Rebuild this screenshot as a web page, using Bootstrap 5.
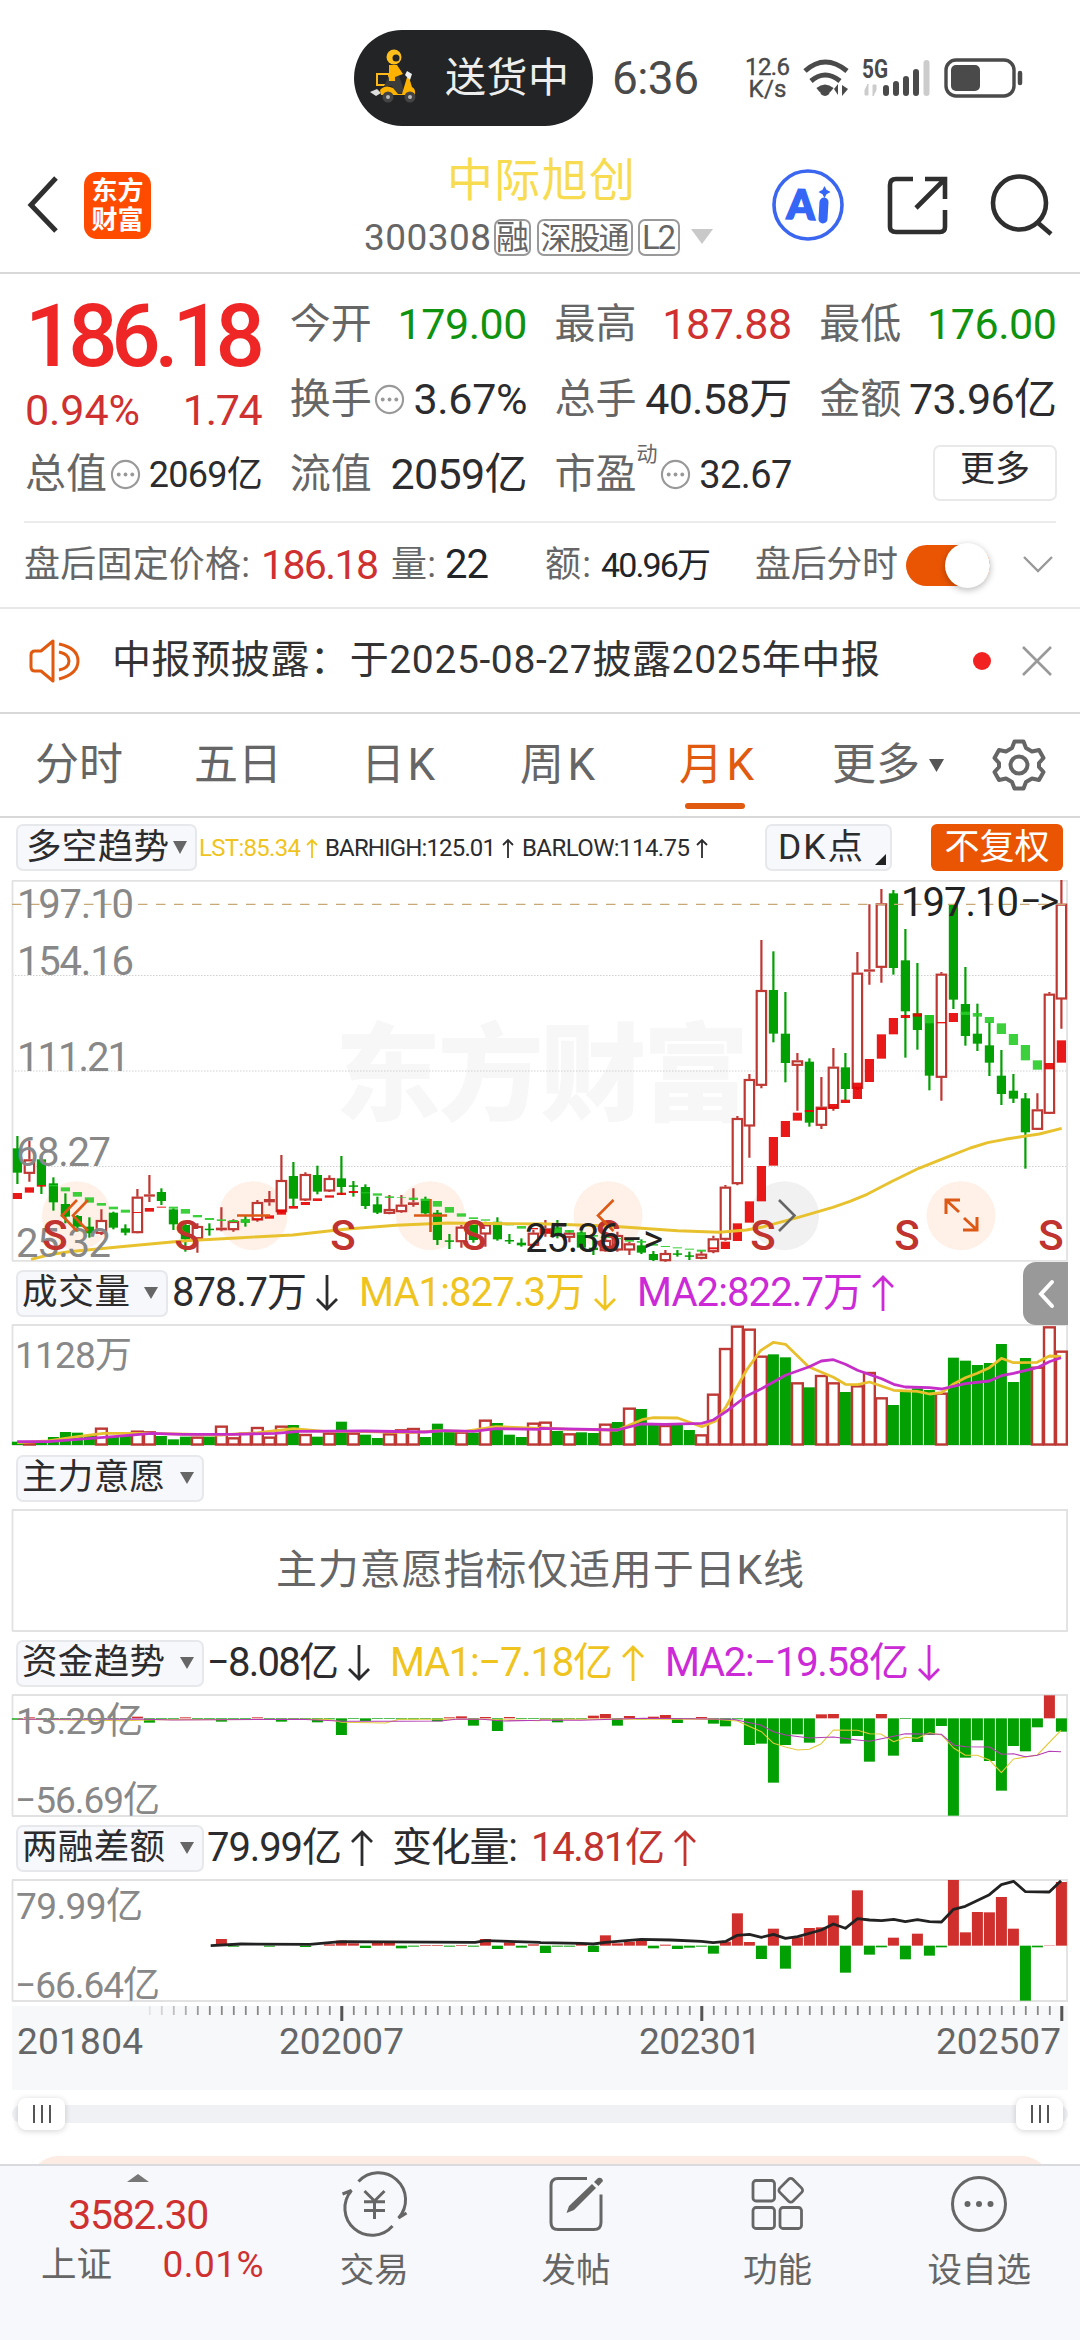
<!DOCTYPE html>
<html lang="zh-CN">
<head>
<meta charset="utf-8">
<meta name="viewport" content="width=1080">
<title>中际旭创 300308</title>
<link href="https://cdn.jsdelivr.net/npm/bootstrap@5.3.0/dist/css/bootstrap.min.css" rel="stylesheet">
<style>
:root{--up:#ee2626;--red:#cf3030;--green:#0f930f;--ink:#2c2c2e;--sub:#666;--brand:#ea5504;--ma1:#efc41f;--ma2:#cb2ad6;--rule:#d8d8d8}
body{width:1080px;height:2340px;overflow:hidden;background:#fff;color:var(--ink);font-family:Roboto,"Noto Sans CJK SC",sans-serif;line-height:1}
svg{display:block;flex:none}
span,button{white-space:nowrap;flex:none}
.screen{height:2340px}
.c-red{color:var(--red)}.c-green{color:var(--green)}.c-sub{color:var(--sub)}.c-brand{color:#e05a10}.c-ma1{color:var(--ma1)}.c-ma2{color:var(--ma2)}.c-dark{color:#c0332f}
.statusbar{height:138px;padding:18px 0 0 354px}
.pill{width:239px;height:96px;border-radius:48px;background:#222426;color:#eee;padding-left:15px;font-size:41px;margin-right:19px}
.clock{font-size:46px;color:#4a4a4a;width:133px}
.speed{font-size:24px;line-height:22px;width:45px;color:#4a4a4a;-webkit-text-stroke:.4px #4a4a4a}
.titlebar{height:136px;border-bottom:2px solid var(--rule);padding-left:24px;padding-right:26px}
.brandlogo{flex:none;width:67px;height:67px;border-radius:13px;background:#ff4b00;color:#fff;font-size:26px;font-weight:700;line-height:29px;margin-left:23px;padding-top:5px}
.stockhead{flex:none;margin-left:213px;width:350px;margin-right:52px;padding-top:6px}
.stockname{font-size:46px;line-height:58px;color:#f7dc52;margin-left:83px}
.stockcode{height:56px;color:var(--sub);font-size:37px}
.chip{border:2px solid #999;border-radius:7px;height:37px;line-height:33px;font-size:33px;color:var(--sub)}
.quote{padding:13px 23px 9px 25px;gap:27px}
.quote>div{width:237.75px}
.qrow{height:75px;font-size:41px}
.qval{font-size:43px}
.price{height:96px;font-size:87px;font-weight:500;color:var(--up);padding-top:2px}
.chg{height:54px;font-size:43px;color:var(--red)}
.morebtn{width:124px;height:56px;border:2px solid #e9e9e9;border-radius:7px;background:#fff;font-size:35px;line-height:46px;padding:0 0 6px;color:var(--ink);margin-top:-4px}
.afterhours{height:86px;margin:0 24px;border-top:2px solid #ececec;font-size:36px;color:var(--sub)}
.switch-on{width:84px;height:41px;border-radius:21px;background:var(--brand)}
.knob{width:45px;height:45px;border-radius:50%;background:#fff;box-shadow:0 2px 7px rgba(0,0,0,.28)}
.notice{height:107px;border-top:2px solid #e8e8e8;border-bottom:2px solid var(--rule);padding-left:29px;padding-right:28px;font-size:39px;color:#333}
.reddot{width:18px;height:18px;border-radius:50%;background:#f22222}
.periods{height:104px;border-bottom:2px solid var(--rule);font-size:44px;color:var(--sub);padding-left:35px}
.periods>span{height:102px;line-height:103px}
.period-on{position:relative;color:#e05a10}
.period-on i{position:absolute;left:6px;bottom:7px;width:60px;height:6px;border-radius:3px;background:#e05a10}
.legend{height:62px;padding-left:16px;font-size:40px}
.legend.first{padding-bottom:3px;font-size:24px}
.pick{height:47px;border:2px solid #e6e8ec;border-radius:7px;background:#f7f8fb;color:var(--ink);font-size:36px;padding:0 8px 0 4px}
.pick>span:first-child{font-size:35.5px}
.fq{width:132px;height:47px;border-radius:6px;background:var(--brand);color:#fff;font-size:35px}
.drawer{position:absolute;right:12px;top:0;width:45px;height:63px;border-radius:13px 0 0 13px;background:#999}
.slider{height:44px;padding:0 12px;position:relative}
.track{height:18px;border-radius:9px;background:#f0f1f4}
.grip{position:absolute;top:6px;width:47px;height:32px;border-radius:8px;background:#fff;box-shadow:0 1px 6px rgba(0,0,0,.18)}
.grip i{width:2px;height:18px;background:#555}
.peekwrap{height:28px;padding:20px 30px 0;overflow:hidden}
.peek{height:60px;border-radius:28px;background:#fdece3}
.tabbar{height:176px;background:#f7f8fb;border-top:2px solid #d9dade;color:var(--sub);font-size:34.5px}
.tabbar .item{width:202px}
.tabbar .item span{line-height:56px}
</style>
</head>
<body>
<main class="screen d-flex flex-column">

<header class="statusbar d-flex align-items-center">
  <div class="pill d-flex align-items-center">
    <svg width="48" height="60" viewBox="0 0 48 60">
      <path d="M1 44l7-3 4 4-5 3z" fill="#ddd"/><path d="M8 26h12v11H8z" fill="none" stroke="#ffb81c" stroke-width="2"/><path d="M20 28h10l3 8 2 9-8 1-4-8h-8z" fill="#3c3c3a"/>
      <circle cx="25" cy="9" r="7.500" fill="#ffc01e"/><circle cx="27" cy="10" r="3.500" fill="#222426"/><path d="M20 17h8l6 9-8 3v4h-6z" fill="#ffb300"/>
      <path d="M11 42q5-6 13-2l5 6h4l6-20 4 13q4 2 3 8H12z" fill="#ffb300"/><circle cx="19" cy="49" r="5.500" fill="#444"/><circle cx="19" cy="49" r="2" fill="#bbb"/><circle cx="41" cy="49" r="5.500" fill="#444"/><circle cx="41" cy="49" r="2" fill="#bbb"/><path d="M38 23l5 3-2 6-5-5z" fill="#eee"/>
    </svg>
    <span data-w="124" style="margin-left:28px">送货中</span>
  </div>
  <span class="clock"><span data-w="87">6:36</span></span>
  <div class="speed d-flex flex-column align-items-center"><span data-w="45">12.6</span><span data-w="38">K/s</span></div>
  <svg style="margin-left:9px" width="280" height="60" viewBox="800 48 280 60">
    <g fill="none" stroke="#4a4a4a" stroke-width="5"><path d="M806 71q20-18 42 0M812 81q14-12 29 0M819 90q7-6 14 0"/></g><circle cx="826" cy="91" r="5" fill="#4a4a4a"/>
    <path d="M839 84v11l-4-6zM843 85v11l6-7z" fill="#4a4a4a"/>
    <text x="863" y="78" font-size="25" font-weight="700" fill="#4a4a4a" textLength="26" lengthAdjust="spacingAndGlyphs">5G</text>
    <path d="M869 84v11h-3v-5zM874 96v-11h3v5z" fill="#ccc" stroke="#ccc" stroke-width="1"/>
    <g stroke-width="6" stroke-linecap="round" stroke="#4a4a4a"><path d="M887 93v-5M897 93v-9M907 93v-14M917 93v-21"/><path d="M927.500 93v-30" stroke="#ccc"/></g>
    <rect x="947" y="60" width="68" height="36" rx="10" fill="none" stroke="#4a4a4a" stroke-width="3.400"/><rect x="952" y="65" width="29" height="26" rx="5" fill="#4a4a4a"/><path d="M1021 73v10" stroke="#4a4a4a" stroke-width="4.500" stroke-linecap="round"/>
  </svg>
</header>

<section class="titlebar d-flex align-items-center">
  <svg width="37" height="60" viewBox="0 0 37 60"><path d="M32 5L7 32l25 26" transform="translate(0 -2)" fill="none" stroke="#2f2f2f" stroke-width="5"/></svg>
  <div class="brandlogo text-center"><div>东方</div><div>财富</div></div>
  <div class="stockhead">
    <div class="stockname"><span data-w="188">中际旭创</span></div>
    <div class="stockcode d-flex align-items-center"><span data-w="127">300308</span>
      <span class="chip px-0 text-center" style="width:37px;margin-left:3px">融</span><span class="chip text-center" style="width:96px;margin-left:6px"><span data-w="89" style="font-size:31px">深股通</span></span><span class="chip text-center" style="width:42px;margin-left:5px"><span data-w="34">L2</span></span>
      <svg style="margin-left:11px" width="22" height="16"><path d="M0 0h22L11 15z" fill="#c9c9c9"/></svg>
    </div>
  </div>
  <svg width="288" height="80" viewBox="766 165 288 80">
    <circle cx="808" cy="205" r="34" fill="#fff" stroke="#3b66f0" stroke-width="3.600"/>
    <text x="787" y="219.500" font-family="Lato" font-weight="900" font-size="41" fill="#3566f5" stroke="#3566f5" stroke-width="1.800" textLength="28" lengthAdjust="spacingAndGlyphs" transform="rotate(2 808 205)">A</text>
    <path d="M824 202l-1 17" stroke="#3566f5" stroke-width="9" stroke-linecap="round"/><path d="M824.500 186l2 3.800 4 2.200-4 2.200-2 3.800-2-3.800-4-2.200 4-2.200z" fill="#3566f5"/>
    <g fill="none" stroke="#2f2f2f" stroke-width="4.600"><path d="M913 179h-17q-6 0-6 6v42q0 5 6 5h44q5 0 5-5v-17M925 179h20v20M945 179l-29 29"/><circle cx="1019.500" cy="203" r="26.500"/><path d="M1037 222l14 12"/></g>
  </svg>
</section>

<section class="quote d-flex">
  <div>
    <div class="price d-flex align-items-center"><span data-w="240">186.18</span></div>
    <div class="chg d-flex align-items-center justify-content-between"><span data-w="115">0.94%</span><span data-w="80">1.74</span></div>
    <div class="qrow d-flex align-items-center"><span class="c-sub" data-w="82">总值</span><svg style="margin-left:3px" width="31" height="31" viewBox="0 0 32 32"><circle cx="16" cy="16" r="14" fill="none" stroke="#999" stroke-width="2.200"/><g fill="#999"><circle cx="9" cy="16" r="2"/><circle cx="16" cy="16" r="2"/><circle cx="23" cy="16" r="2"/></g></svg><span class="ms-auto" data-w="114" style="font-size:36px">2069亿</span></div>
  </div>
  <div>
    <div class="qrow d-flex align-items-center justify-content-between"><span class="c-sub">今开</span><span class="qval c-green" data-w="130">179.00</span></div>
    <div class="qrow d-flex align-items-center"><span class="c-sub">换手</span><svg style="margin-left:2px" width="31" height="31" viewBox="0 0 32 32"><circle cx="16" cy="16" r="14" fill="none" stroke="#999" stroke-width="2.200"/><g fill="#999"><circle cx="9" cy="16" r="2"/><circle cx="16" cy="16" r="2"/><circle cx="23" cy="16" r="2"/></g></svg><span class="qval ms-auto" data-w="114">3.67%</span></div>
    <div class="qrow d-flex align-items-center justify-content-between"><span class="c-sub">流值</span><span class="qval" data-w="137">2059亿</span></div>
  </div>
  <div>
    <div class="qrow d-flex align-items-center justify-content-between"><span class="c-sub">最高</span><span class="qval c-red" data-w="130">187.88</span></div>
    <div class="qrow d-flex align-items-center justify-content-between"><span class="c-sub">总手</span><span class="qval" data-w="147">40.58万</span></div>
    <div class="qrow d-flex align-items-center"><span class="c-sub">市盈</span><span class="c-sub align-self-start" style="font-size:21px;padding-top:7px">动</span><svg style="margin-left:2px" width="31" height="31" viewBox="0 0 32 32"><circle cx="16" cy="16" r="14" fill="none" stroke="#999" stroke-width="2.200"/><g fill="#999"><circle cx="9" cy="16" r="2"/><circle cx="16" cy="16" r="2"/><circle cx="23" cy="16" r="2"/></g></svg><span class="ms-auto" data-w="93" style="font-size:38px">32.67</span></div>
  </div>
  <div>
    <div class="qrow d-flex align-items-center justify-content-between"><span class="c-sub">最低</span><span class="qval c-green" data-w="130">176.00</span></div>
    <div class="qrow d-flex align-items-center justify-content-between"><span class="c-sub">金额</span><span class="qval" data-w="148">73.96亿</span></div>
    <div class="qrow d-flex align-items-center justify-content-end"><button class="morebtn">更多</button></div>
  </div>
</section>

<section class="afterhours d-flex align-items-center">
  <span data-w="226">盘后固定价格:</span><span class="c-red" data-w="118" style="font-size:41px;margin-left:11px">186.18</span><span style="margin-left:12px" data-w="45">量:</span><span class="text-dark" data-w="44" style="font-size:40px;margin-left:9px">22</span><span style="margin-left:56px" data-w="46">额:</span><span data-w="110" class="text-dark" style="font-size:34px;margin-left:10px">40.96万</span><span style="margin-left:44px" data-w="143">盘后分时</span>
  <div class="switch-on d-flex align-items-center justify-content-end" style="margin-left:8px"><div class="knob"></div></div>
  <svg style="margin-left:33px" width="30" height="20"><path d="M1 2l14 14L29 2" fill="none" stroke="#999" stroke-width="2.400"/></svg>
</section>

<section class="notice d-flex align-items-center">
  <svg width="53" height="46" viewBox="29 636 53 46"><g fill="none" stroke="#e05a10" stroke-width="3"><path d="M53 639v40l-12-10h-6q-4 0-4-4v-12q0-4 4-4h6z" stroke-linejoin="round"/><path d="M59 642q19 4 19 17t-19 18M59 650q10 2 10 9t-10 9"/></g></svg>
  <span data-w="768" style="margin-left:30px">中报预披露：于2025-08-27披露2025年中报</span>
  <span class="reddot ms-auto"></span>
  <svg style="margin-left:31px" width="30" height="30"><path d="M1 1l28 28M29 1L1 29" stroke="#999" stroke-width="2.600"/></svg>
</section>

<nav class="periods d-flex align-items-center">
  <span data-w="88">分时</span><span data-w="88" style="margin-left:71px">五日</span><span data-w="74" style="margin-left:79px">日K</span><span data-w="75" style="margin-left:85px">周K</span><span class="period-on" style="margin-left:84px;width:76px"><span data-w="75">月K</span><i></i></span><span data-w="88" style="margin-left:77px">更多</span>
  <svg style="margin-left:9px" width="16" height="13"><path d="M0 0h15L7.500 13z" fill="#555"/></svg>
  <svg style="margin-left:46px" width="56" height="56" viewBox="-28 -28 56 56"><g fill="none" stroke="#666" stroke-width="4"><path d="M-4.500-23.500h9l2.500 6.500 6 3.500 7-1.500 4.500 8-4.500 5v4l4.500 5-4.500 8-7-1.500-6 3.500-2.500 6.500h-9l-2.500-6.500-6-3.500-7 1.500-4.500-8 4.500-5v-4l-4.500-5 4.500-8 7 1.500 6-3.500z" stroke-linejoin="round"/><circle r="8.500"/></g></svg>
</nav>

<div class="legend first d-flex align-items-center">
  <div class="pick d-flex align-items-center" style="width:181px;padding:0 0 0 8px"><span data-w="143">多空趋势</span><svg class="ms-1" width="14" height="13"><path d="M0 0h14L7 13z" fill="#666"/></svg></div>
  <span class="c-ma1" data-w="102" style="margin-left:2px">LST:85.34</span><svg style="margin-left:5px" width="12" height="20"><path d="M6 20V2M1 7l5-5 5 5" fill="none" stroke="#efc41f" stroke-width="1.800"/></svg>
  <span style="margin-left:7px" data-w="171">BARHIGH:125.01</span><svg style="margin-left:6px" width="12" height="20"><path d="M6 20V2M1 7l5-5 5 5" fill="none" stroke="#2c2c2e" stroke-width="1.800"/></svg>
  <span style="margin-left:8px" data-w="168">BARLOW:114.75</span><svg style="margin-left:6px" width="12" height="20"><path d="M6 20V2M1 7l5-5 5 5" fill="none" stroke="#2c2c2e" stroke-width="1.800"/></svg>
  <div class="pick d-flex align-items-center" style="width:127px;margin-left:57px;padding:0 4px 0 11px"><span data-w="85">DK点</span><svg class="ms-auto align-self-end mb-1" width="11" height="11"><path d="M11 0v11H0z" fill="#222"/></svg></div>
  <div class="fq d-flex align-items-center justify-content-center" style="margin-left:39px">不复权</div>
</div>

<svg id="kline" width="1080" height="382" viewBox="0 880 1080 382"></svg>

<div class="legend d-flex align-items-center position-relative">
  <div class="pick d-flex align-items-center justify-content-between" style="width:152px"><span data-w="108">成交量</span><svg width="14" height="12"><path d="M0 0h14L7 12z" fill="#666"/></svg></div>
  <span data-w="135" style="margin-left:4px">878.7万</span><i data-arrow="down" data-c="#2c2c2e"></i>
  <span class="c-ma1" data-w="226" style="margin-left:21px">MA1:827.3万</span><i data-arrow="down" data-c="#efc41f"></i>
  <span class="c-ma2" data-w="226" style="margin-left:21px">MA2:822.7万</span><i data-arrow="up" data-c="#cb2ad6"></i>
  <div class="drawer d-flex align-items-center justify-content-center"><svg width="18" height="30"><path d="M15 3L4 15l11 12" fill="none" stroke="#fff" stroke-width="4" stroke-linecap="round"/></svg></div>
</div>
<svg id="volume" width="1080" height="123" viewBox="0 1324 1080 123"></svg>

<div class="legend d-flex align-items-center">
  <div class="pick d-flex align-items-center justify-content-between" style="width:188px"><span data-w="143">主力意愿</span><svg width="14" height="12"><path d="M0 0h14L7 12z" fill="#666"/></svg></div>
</div>
<svg id="intent" width="1080" height="123" viewBox="0 1509 1080 123"></svg>

<div class="legend d-flex align-items-center">
  <div class="pick d-flex align-items-center justify-content-between" style="width:188px"><span data-w="143">资金趋势</span><svg width="14" height="12"><path d="M0 0h14L7 12z" fill="#666"/></svg></div>
  <span data-w="132" style="margin-left:3px">−8.08亿</span><i data-arrow="down" data-c="#2c2c2e"></i>
  <span class="c-ma1" data-w="223" style="margin-left:20px">MA1:−7.18亿</span><i data-arrow="up" data-c="#efc41f"></i>
  <span class="c-ma2" data-w="244" style="margin-left:21px">MA2:−19.58亿</span><i data-arrow="down" data-c="#cb2ad6"></i>
</div>
<svg id="fund" width="1080" height="123" viewBox="0 1694 1080 123"></svg>

<div class="legend d-flex align-items-center">
  <div class="pick d-flex align-items-center justify-content-between" style="width:188px"><span data-w="143">两融差额</span><svg width="14" height="12"><path d="M0 0h14L7 12z" fill="#666"/></svg></div>
  <span data-w="135" style="margin-left:3px">79.99亿</span><i data-arrow="up" data-c="#2c2c2e"></i>
  <span data-w="126" style="margin-left:19px">变化量:</span><span class="c-dark" data-w="134" style="margin-left:13px">14.81亿</span><i data-arrow="up" data-c="#c0332f"></i>
</div>
<svg id="margin" width="1080" height="123" viewBox="0 1879 1080 123"></svg>
<svg id="axis" width="1080" height="90" viewBox="0 2002 1080 90"></svg>

<div class="slider d-flex flex-column justify-content-center">
  <div class="track"></div>
  <div class="grip d-flex align-items-center justify-content-center" style="left:18px;gap:6px"><i></i><i></i><i></i></div>
  <div class="grip d-flex align-items-center justify-content-center" style="right:17px;gap:6px"><i></i><i></i><i></i></div>
</div>
<div class="peekwrap"><div class="peek"></div></div>

<footer class="tabbar d-flex">
  <div style="width:274px">
    <svg style="margin:8px 0 0 127px" width="22" height="8"><path d="M11 0l11 8H0z" fill="#777"/></svg>
    <div class="text-center c-red" style="font-size:41px;line-height:66px;height:62px"><span data-w="141" class="ms-1">3582.30</span></div>
    <div class="d-flex align-items-center justify-content-between" style="padding:0 10px 0 41px;line-height:40px;margin-top:1px"><span data-w="71" style="font-size:35.500px">上证</span><span class="c-red" data-w="101" style="font-size:37px">0.01%</span></div>
  </div>
  <div class="item d-flex flex-column align-items-center">
    <svg width="68" height="76" viewBox="341 2166 68 76"><g fill="none" stroke="#666" stroke-width="3"><path d="M359.500 2181.500A27 27 0 0 1 399.500 2218l8-5M393.500 2226A27 27 0 0 1 352.500 2190.500l-9 3.500"/><path d="M365.500 2191l10 10 10-10M375.500 2201v18M365 2201.800h21M365 2210.500h21"/></g></svg><span>交易</span></div>
  <div class="item d-flex flex-column align-items-center">
    <svg width="58" height="76" viewBox="548 2166 58 76"><path d="M588 2178.500h-29q-7 0-7 7v37q0 7 7 7h36q7 0 7-7v-28" fill="none" stroke="#666" stroke-width="3"/><path d="M567.500 2213l2.500-7 23-22 4 4-22 22z M595 2182l4-4q4-1 5 3l-4.500 5z" fill="#666"/></svg><span>发帖</span></div>
  <div class="item d-flex flex-column align-items-center">
    <svg width="56" height="76" viewBox="751 2166 56 76"><g fill="none" stroke="#666" stroke-width="2.800"><rect x="754" y="2180.500" width="21.500" height="20.500" rx="3"/><rect x="754" y="2207.500" width="21.500" height="21" rx="3"/><rect x="781" y="2207.500" width="21.500" height="21" rx="3"/><rect x="782.500" y="2181" width="18.500" height="18.500" rx="3" transform="rotate(45 791.750 2190.250)"/></g></svg><span>功能</span></div>
  <div class="item d-flex flex-column align-items-center">
    <svg width="60" height="76" viewBox="949 2166 60 76"><circle cx="979" cy="2204" r="26.500" fill="none" stroke="#666" stroke-width="3"/><g fill="#666"><circle cx="967.500" cy="2204" r="3"/><circle cx="979" cy="2204" r="3"/><circle cx="990.500" cy="2204" r="3"/></g></svg><span>设自选</span></div>
</footer>
</main>

<script src="https://cdn.jsdelivr.net/npm/bootstrap@5.3.0/dist/js/bootstrap.bundle.min.js"></script>
<script>
// Spread each figure over its column width
document.querySelectorAll('[data-w]').forEach(e=>{
  e.style.display='inline-block';
  const n=[...e.textContent].length, ls=(e.dataset.w-e.getBoundingClientRect().width)/Math.max(1,n-1);
  e.style.letterSpacing=ls+'px'; e.style.marginRight=-ls+'px';
});
document.querySelectorAll('[data-arrow]').forEach(e=>{
  const d=e.dataset.arrow=='up'?'M11 36V2M1 12L11 2l10 10':'M11 0v34M1 24l10 10 10-10';
  e.outerHTML=`<svg style="margin-left:9px" width="22" height="36"><path d="${d}" fill="none" stroke="${e.dataset.c}" stroke-width="2.800"/></svg>`;
});
const RED='#be3834',GRN='#03a003',X0=17.4,STEP=12;
const cx=i=>X0+i*STEP;
// Curve points: a = left half, b = right half, three y units per pixel
const line=(a,b,oy,c,w)=>{
  const p=a.map(([x,y])=>[x/2.904,oy+y/3]).concat(b.map(([x,y])=>[540+x/2.904,oy+y/3]));
  return `<polyline points="${p.map(q=>q.map(v=>v.toFixed(1)).join()).join(' ')}" fill="none" stroke="${c}" stroke-width="${w}" stroke-linejoin="round"/>`;
};
const frame=(t,b)=>`<path d="M12.500 ${t}V${b}M1067 ${t}V${b}M12 ${t}H1068M12 ${b}H1068" stroke="#e2e2e2" stroke-width="1.800" fill="none"/>`;
const txt=(x,y,s,w,fs=40,c='#888',ex='')=>`<text x="${x}" y="${y}" font-size="${fs}" fill="${c}" textLength="${w}" ${ex}>${s}</text>`;
const put=(id,s)=>document.getElementById(id).innerHTML=s;

// high, body top, body bottom, low
const K=`g798,835,908,942 r812,868,910,935 g865,868,945,972 g922,940,997,1022 g970,1002,1040,1060 g1035,1038,1070,1085 g1042,1070,1090,1103 r1018,1050,1090,1095 g1025,1028,1073,1078 g1063,1075,1088,1096 r957,980,1088,1090 r915,973,980,996 g955,966,993,1005 g1015,1018,1063,1080 g1055,1065,1108,1145 r1060,1068,1106,1148 g1060,1076,1080,1097 r1012,1073,1081,1084 r1048,1053,1079,1085 g1038,1048,1058,1070 r990,996,1050,1055 r963,987,997,1007 r855,930,1025,1030 g876,918,986,1008 r907,912,990,993 g887,915,965,973 r916,924,963,966 g858,925,951,975 g933,946,949,980 g943,951,1008,1017 g980,1003,1028,1032 r975,1017,1030,1033 r975,1004,1025,1028 r955,997,1005,1010 g980,987,1030,1033 g1020,1028,1110,1125 g1092,1111,1115,1137 r1065,1070,1115,1133 g1050,1060,1110,1118 r1055,1063,1092,1130 g1042,1060,1108,1112 g1092,1110,1114,1122 g1105,1118,1126,1130 r1080,1088,1126,1132 r1050,1075,1090,1100 g1050,1072,1095,1105 r1080,1088,1102,1117 g1080,1087,1133,1138 g1100,1133,1140,1155 r1105,1110,1142,1145 r1085,1095,1140,1145 r1115,1120,1140,1155 g1108,1126,1148,1152 g1143,1152,1170,1173 r1140,1149,1172,1175 g1140,1150,1154,1160 g1145,1156,1160,1170 r1142,1151,1165,1168 r1097,1105,1145,1150 r945,950,1108,1112 r738,744,941,946 r612,627,768,863 r210,360,646,655 g244,360,491,517 g366,491,579,637 r549,571,586,722 g565,575,758,770 r621,710,766,777 r534,590,715,722 g549,592,657,690 r246,308,655,660 r103,298,305,344 r57,100,292,338 g60,70,294,314 g177,271,424,563 g279,430,480,539 g435,435,617,661 r306,311,622,692 g103,103,389,417 g291,402,498,527 g401,491,521,543 g455,526,578,618 g540,617,672,705 g612,662,686,699 g669,685,787,896 r670,718,778,780 r366,371,730,732 r30,101,387,476`.split(' ');
const T=`r969,987 r952,968 r945,950 g945,949 g952,964 g966,980 g982,998 g999,1007 g1010,1018 g1019,1028 r1026,1029 r1014,1025 r1010,1013 g1010,1016 g1017,1031 g1035,1042 g1044,1050 g1048,1053 g1050,1056 g1048,1058 r1045,1050 r1036,1046 r1018,1034 r1008,1016 r996,1005 r985,993 r976,983 r968,975 r963,969 g967,970 g970,977 g979,984 g982,984 g983,990 g986,993 g993,1010 g1011,1028 g1030,1040 g1042,1047 g1048,1052 g1055,1059 g1061,1066 g1068,1076 r1074,1078 r1078,1088 g1075,1090 g1080,1088 g1090,1095 g1095,1100 g1100,1104 g1104,1108 g1110,1115 g1113,1118 g1122,1127 g1128,1131 g1132,1135 g1136,1139 g1139,1145 r1132,1138 r1115,1137 r1060,1113 r994,1058 r888,994 r801,887 r753,801 r728,752 r720,726 r714,720 r702,716 r689,699 r638,687 r567,636 r493,566 r444,493 r435,444 r430,440 g435,460 r456,460 r429,456 g425,435 g429,440 g441,459 g460,492 g492,525 g525,571 g571,599 r579,598 r511,578`.split(' ');
let s='';
// Translucent control discs
[76.5,253,430.5,608,784.5,961].forEach((x,i)=>s+=`<circle cx="${x}" cy="1215.700" r="34.500" fill="${i==4?'#f1f1f1':'#fff0e8'}"/>`);
s+=`<text x="335" y="1112" font-size="106" font-weight="900" fill="#f7f7f7" textLength="414">东方财富</text>`;
[975.5,1071,1166.5].forEach(y=>s+=`<path d="M12 ${y}H1067" stroke="#d0d0d0" stroke-width="1" stroke-dasharray="1.500 1.500"/>`);
s+=frame(880.8,1260.8);
K.forEach((k,i)=>{
  const [h,t,b,l]=k.slice(1).split(',').map(v=>870+v/3), x=cx(i), r=k[0]=='r', c=r?RED:GRN;
  if(r){
    s+=`<path d="M${x} ${h}V${t}M${x} ${b}V${l}" stroke="${c}" stroke-width="2.200"/>`;
    s+= b-t<3.5?`<rect x="${x-5.500}" y="${t}" width="11" height="${b-t}" fill="${c}"/>`:`<rect x="${x-4.700}" y="${t+1}" width="9.400" height="${b-t-1.500}" fill="#fff" stroke="${c}" stroke-width="2.200"/>`;
  } else s+=`<path d="M${x} ${h}V${l}" stroke="${c}" stroke-width="2.200"/><rect x="${x-4.600}" y="${t}" width="9.200" height="${Math.max(1.500,b-t)}" fill="${c}"/>`;
});
T.forEach((k,i)=>{
  const [t,b]=k.slice(1).split(',').map(v=>870+v/3);
  s+=`<rect x="${cx(i)-4.600}" y="${t}" width="9.200" height="${b-t}" fill="${k[0]=='r'?'#e80000':'#27cb27'}" opacity=".9"/>`;
});
s+=`<path d="M12 904.300H1067" stroke="#c9a878" stroke-width="1.200" stroke-dasharray="9.500 8.500"/>`;
s+=line([[90,1168],[140,1155],[200,1145],[350,1130],[538,1112],[700,1103],[850,1095],[1000,1078],[1150,1066],[1300,1059],[1568,1062]],[[0,1061],[200,1068],[400,1082],[520,1087],[600,1080],[650,1070],[750,1042],[850,1012],[900,994],[950,973],[1020,935],[1100,895],[1180,862],[1250,834],[1300,818],[1350,808],[1450,792],[1515,775]],870,'#e8c22e',2.900);
s+=txt(17,918,'197.10',117)+txt(17,975,'154.16',117)+txt(17,1070.500,'111.21',113)+txt(16,1165.500,'68.27',95)+txt(16,1257,'25.32',95);
[55,187,343,474,608,763,907,1051].forEach(x=>s+=`<text x="${x}" y="1249.500" font-size="42" font-weight="500" text-anchor="middle" fill="#c0332f">S</text>`);
s+=`<g fill="none" stroke="#dd5a16" stroke-width="2.600"><path d="M77 1200l-15 15.500 15 15.500M88 1200l-15 15.500 15 15.500M237 1215.500h33M414 1215.500h33M430.500 1199v33M613.500 1200l-15.500 15.500 15.500 15.500"/><path stroke="#666" d="M779 1200l15.500 15.500L779 1231"/><path stroke-width="3" d="M946 1214v-14h14M946 1200l13 12M977 1217v13h-14M977 1230l-13-12"/></g>`;
s+=txt(525,1252,'25.36',96,40,'#222')+txt(621,1252,'−&gt;',42,38,'#222')+txt(901,916,'197.10',118,40,'#222')+txt(1020,914,'−&gt;',39,38,'#222');
put('kline',s);

const V='g545 r548 g543 g531 g516 g518 g527 r503 g530 g527 r512 r514 g528 g538 g530 r530 g530 r497 r532 r518 r501 r530 r497 g495 r522 g530 r518 g485 r518 g524 g534 r520 r508 r504 g531 g491 g515 r515 g518 r479 g489 g524 g531 r488 r485 g513 r520 g517 g519 r491 g486 r443 g447 g495 r495 g495 g510 r523 r401 r264 r197 r206 r287 g283 g292 r367 g382 r345 r367 g396 r376 r336 r412 g435 g395 g385 g390 r398 g293 g302 g315 g309 g252 g366 g294 r320 r199 r272'.split(' ');
s=frame(1325,1445);
V.forEach((v,i)=>{
  const t=1260+v.slice(1)/3,h=1445-t,x=cx(i);
  s+=v[0]=='r'?`<rect x="${x-5.400}" y="${t+1}" width="10.800" height="${Math.max(.5,h-1.500)}" fill="#fff" stroke="${RED}" stroke-width="2.400"/>`:`<rect x="${x-5.500}" y="${t}" width="11" height="${h}" fill="${GRN}"/>`;
});
s+=line([[50,548],[140,543],[225,530],[300,520],[440,520],[640,525],[750,518],[852,506],[950,515],[1060,515],[1200,518],[1270,512],[1350,514],[1440,500],[1568,505]],[[0,503],[85,508],[225,510],[300,478],[330,473],[400,474],[470,500],[510,483],[540,440],[600,330],[640,272],[678,247],[713,253],[780,320],[852,352],[887,373],[922,374],[957,366],[1027,391],[1096,394],[1131,402],[1166,398],[1201,372],[1235,353],[1270,340],[1305,323],[1340,295],[1375,308],[1444,307],[1479,288],[1513,290]],1260,'#e8bf2c',2.800);
s+=line([[50,545],[140,545],[225,538],[330,530],[440,520],[530,523],[680,523],[800,520],[870,514],[1060,513],[1235,516],[1290,512],[1375,514],[1440,506],[1568,508]],[[0,505],[224,510],[294,492],[364,493],[470,490],[503,480],[540,455],[600,408],[643,386],[713,346],[782,320],[817,303],[852,299],[887,313],[922,331],[992,356],[1027,373],[1061,381],[1131,383],[1166,387],[1235,371],[1305,363],[1340,347],[1375,340],[1444,323],[1479,305],[1513,293]],1260,'#c52fc8',2.800);
s+=txt(15,1368,'1128万',117,37);
put('volume',s);

put('intent',frame(1510,1631)+`<text x="276" y="1583.500" font-size="41" fill="#666" textLength="528">主力意愿指标仅适用于日K线</text>`);

const F=[209,202,207,207,207,207,207,207,207,207,200,218,208,207,202,207,208,215,208,208,202,207,215,208,208,217,208,255,207,213,207,207,208,208,207,214,202,199,227,201,243,201,207,207,207,217,207,207,197,192,227,198,208,200,195,219,207,201,221,229,208,285,281,398,285,253,278,193,192,281,258,335,192,317,207,276,255,228,497,323,271,333,422,288,304,232,136,245];
const bars=(a,zero,oy,start=0)=>a.map((v,i)=>v==null?'':`<rect x="${cx(i+start)-5.500}" y="${oy+Math.min(v,zero)/3}" width="11" height="${Math.abs(v-zero)/3}" fill="${v<zero?'#cf302d':GRN}"/>`).join('');
s=frame(1695,1816)+bars(F,205,1650);
s+=line([[50,208],[360,212],[450,209],[950,208],[992,217],[1120,219],[1160,208],[1410,208],[1568,212]],[[0,208],[500,207],[573,213],[643,245],[678,280],[713,291],[748,300],[782,298],[817,281],[852,240],[922,241],[957,251],[990,252],[1027,275],[1061,262],[1096,265],[1131,248],[1166,255],[1201,294],[1235,316],[1270,316],[1305,330],[1340,368],[1375,327],[1444,315],[1513,241]],1650,'#e3c93a',1.100);
s+=line([[50,208],[400,207],[500,210],[870,208],[1000,214],[1150,214],[1280,213],[1330,207],[1400,208],[1460,213],[1568,211]],[[0,210],[120,211],[300,205],[560,208],[640,225],[678,245],[713,255],[782,264],[852,261],[922,270],[957,274],[992,266],[1061,251],[1166,253],[1201,285],[1235,290],[1305,291],[1340,313],[1375,311],[1410,320],[1444,316],[1479,304],[1513,305]],1650,'#b43cb4',1.100);
s+=txt(16,1733.500,'13.29亿',127,37)+txt(15,1813,'−56.69亿',145,37);
put('fund',s);

const M=[867,890,null,null,890,null,null,891,null,883,872,880,894,878,878,895,890,885,885,890,885,890,867,897,877,893,883,909,890,890,882,906,856,880,875,870,895,884,897,893,890,911,875,790,876,927,836,956,862,834,832,796,968,721,914,892,863,928,851,917,892,690,847,786,787,741,836,1052,892,886,696];
s=frame(1880,2001)+bars(M,887,1650,17);
s+=line([[612,887],[700,882],[900,883],[990,875],[1380,877],[1410,872],[1568,877]],[[0,878],[120,880],[155,882],[190,877],[294,868],[380,870],[469,874],[503,878],[540,874],[573,856],[608,853],[643,862],[678,853],[713,865],[748,860],[817,840],[852,822],[887,835],[922,806],[957,810],[992,812],[1027,808],[1061,815],[1096,809],[1131,815],[1166,816],[1201,778],[1235,769],[1305,734],[1340,704],[1375,694],[1410,725],[1479,726],[1513,692]],1650,'#222',2.800);
s+=txt(16,1918.500,'79.99亿',127,37)+txt(15,1998,'−66.64亿',145,37);
put('margin',s);

s='<rect x="12" y="2006" width="1056" height="84" fill="#f7f8fa"/>';
for(let i=11;i<88;i++){
  const major=i==27||i==57||i==87;
  s+=`<path d="M${cx(i)+.4} 2006v${major?15:9}" stroke="${major?'#555':'#888'}" stroke-width="${major?3:1.800}" opacity="${i<16?(i-10)/6:1}"/>`;
}
s+=txt(17,2054,'201804',126,37,'#666')+txt(279,2054,'202007',125,37,'#666')+txt(639,2054,'202301',122,37,'#666')+txt(936,2054,'202507',125,37,'#666');
put('axis',s);
</script>
</body>
</html>
